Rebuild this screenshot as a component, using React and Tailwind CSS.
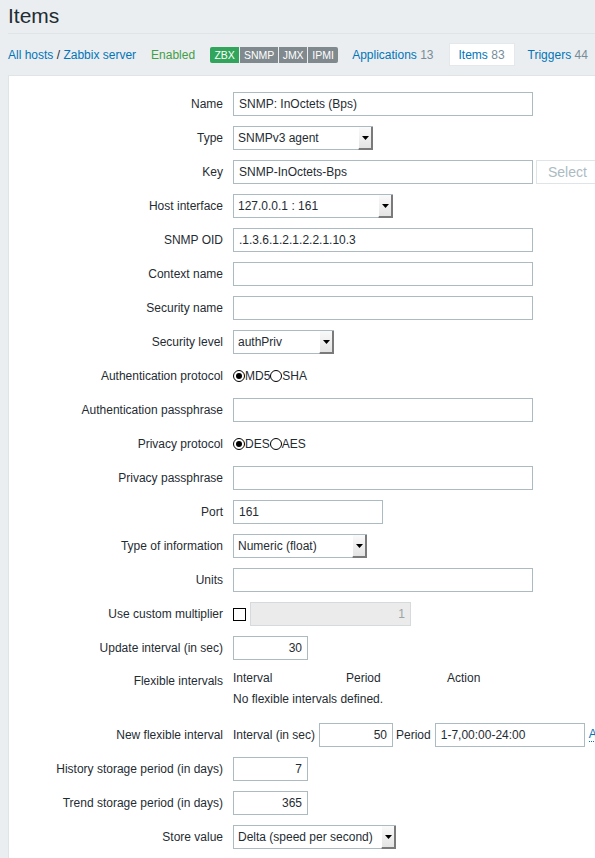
import React from "react";

const Input = ({ w = "w-[300px]", value = "", right = false }) => (
  <div
    className={`h-[24px] border border-[#acbbc2] bg-white flex items-center px-[5px] text-[#1f2c33] whitespace-nowrap overflow-hidden ${w} ${right ? "justify-end" : ""}`}
  >
    {value}
  </div>
);

const Select = ({ w, value }) => (
  <div className={`relative h-[24px] border border-[#acbbc2] bg-white flex items-center pl-[4px] text-[#1f2c33] whitespace-nowrap ${w}`}>
    <span>{value}</span>
    <div className="absolute right-[-1px] top-0 bottom-[-1px] w-[15px] bg-gradient-to-b from-[#fafafa] to-[#e4e4e4] border-l border-l-[#ffffff] border-r-2 border-b-2 border-r-[#7a7a7a] border-b-[#7a7a7a] flex items-center justify-center">
      <svg width="7" height="4" viewBox="0 0 7 4">
        <path d="M0 0h7L3.5 4z" fill="#000" />
      </svg>
    </div>
  </div>
);

const Radio = ({ checked }) => (
  <span className="inline-flex w-[12px] h-[12px] rounded-full border border-black items-center justify-center">
    {checked && <span className="w-[6px] h-[6px] rounded-full bg-black" />}
  </span>
);

const Label = ({ children, top = false }) => (
  <div className={`text-right text-[#1f2c33] whitespace-nowrap ${top ? "self-start pt-[4px] leading-[14px]" : ""}`}>
    {children}
  </div>
);

export default function App() {
  return (
    <div className="w-[595px] h-[858px] overflow-hidden bg-[#ebeef0] font-['Liberation_Sans',Arial,sans-serif] text-[12px] text-[#1f2c33]">
      <div className="pl-[8px]">
        <div className="h-[34px] border-b border-[#dfe4e7] pt-[4px]">
          <h1 className="text-[21px] leading-[24px] text-[#1f2c33]">Items</h1>
        </div>
        <div className="h-[41px] flex items-center whitespace-nowrap">
          <span>
            <span className="text-[#0275b8]">All hosts</span>
            <span> / </span>
            <span className="text-[#0275b8]">Zabbix server</span>
          </span>
          <span className="ml-[15px] text-[#429e47]">Enabled</span>
          <span className="ml-[15px] flex h-[16px] text-[10.5px] leading-[16px] text-white gap-[1px] text-center">
            <span className="bg-[#30a55b] w-[29px] rounded-l-[2px]">ZBX</span>
            <span className="bg-[#7f898e] w-[38px]">SNMP</span>
            <span className="bg-[#7f898e] w-[28px]">JMX</span>
            <span className="bg-[#7f898e] w-[30px] rounded-r-[2px]">IPMI</span>
          </span>
          <span className="ml-[14px]">
            <span className="text-[#0275b8]">Applications</span>
            <span className="text-[#768d99]"> 13</span>
          </span>
          <span className="ml-[15px] h-[23px] flex items-center px-[9px] bg-white border border-[#e4e8eb]">
            <span className="text-[#0275b8]">Items</span>
            <span className="text-[#768d99]">&nbsp;83</span>
          </span>
          <span className="ml-[13px]">
            <span className="text-[#0275b8]">Triggers</span>
            <span className="text-[#768d99]"> 44</span>
          </span>
        </div>
        <div className="bg-white border-l border-t border-[#dfe4e7] h-[800px] pt-[16px]">
          <div className="grid grid-cols-[214px_1fr] gap-x-[10px] gap-y-[10px] items-center">
            <Label>Name</Label>
            <div className="flex"><Input value="SNMP: InOctets (Bps)" /></div>

            <Label>Type</Label>
            <div className="flex"><Select w="w-[140px]" value="SNMPv3 agent" /></div>

            <Label>Key</Label>
            <div className="flex items-center whitespace-nowrap">
              <Input value="SNMP-InOctets-Bps" />
              <div className="ml-[3px] h-[24px] border border-[#dfe4e7] bg-white px-[11px] flex items-center text-[14px] text-[#acbbc2] shrink-0">
                Select
              </div>
            </div>

            <Label>Host interface</Label>
            <div className="flex"><Select w="w-[160px]" value="127.0.0.1 : 161" /></div>

            <Label>SNMP OID</Label>
            <div className="flex"><Input value=".1.3.6.1.2.1.2.2.1.10.3" /></div>

            <Label>Context name</Label>
            <div className="flex"><Input /></div>

            <Label>Security name</Label>
            <div className="flex"><Input /></div>

            <Label>Security level</Label>
            <div className="flex"><Select w="w-[101px]" value="authPriv" /></div>

            <Label>Authentication protocol</Label>
            <div className="flex items-center h-[24px]">
              <Radio checked />
              <span>MD5</span>
              <Radio />
              <span>SHA</span>
            </div>

            <Label>Authentication passphrase</Label>
            <div className="flex"><Input /></div>

            <Label>Privacy protocol</Label>
            <div className="flex items-center h-[24px]">
              <Radio checked />
              <span>DES</span>
              <Radio />
              <span>AES</span>
            </div>

            <Label>Privacy passphrase</Label>
            <div className="flex"><Input /></div>

            <Label>Port</Label>
            <div className="flex"><Input w="w-[150px]" value="161" /></div>

            <Label>Type of information</Label>
            <div className="flex"><Select w="w-[134px]" value="Numeric (float)" /></div>

            <Label>Units</Label>
            <div className="flex"><Input /></div>

            <Label>Use custom multiplier</Label>
            <div className="flex items-center">
              <span className="w-[13px] h-[13px] border-[1.5px] border-black bg-white" />
              <div className="ml-[4px] h-[24px] w-[161px] border border-[#d5dadd] bg-[#ebebeb] flex items-center justify-end px-[5px] text-[#9aa3a8]">
                1
              </div>
            </div>

            <Label>Update interval (in sec)</Label>
            <div className="flex"><Input w="w-[75px]" value="30" right /></div>

            <Label top>Flexible intervals</Label>
            <div className="flex flex-col pb-[6px]">
              <div className="flex h-[16px] items-center">
                <span className="w-[113px]">Interval</span>
                <span className="w-[101px]">Period</span>
                <span>Action</span>
              </div>
              <div className="mt-[5px] h-[16px] flex items-center">No flexible intervals defined.</div>
            </div>

            <Label>New flexible interval</Label>
            <div className="flex items-center whitespace-nowrap">
              <span>Interval (in sec)</span>
              <div className="ml-[4px]"><Input w="w-[74px]" value="50" right /></div>
              <span className="ml-[3px]">Period</span>
              <div className="ml-[4px]"><Input w="w-[150px]" value="1-7,00:00-24:00" /></div>
              <span className="ml-[4px] text-[#0275b8] border-b border-dotted border-[#0275b8] leading-[13px]">Add</span>
            </div>

            <Label>History storage period (in days)</Label>
            <div className="flex"><Input w="w-[75px]" value="7" right /></div>

            <Label>Trend storage period (in days)</Label>
            <div className="flex"><Input w="w-[75px]" value="365" right /></div>

            <Label>Store value</Label>
            <div className="flex"><Select w="w-[163px]" value="Delta (speed per second)" /></div>
          </div>
        </div>
      </div>
    </div>
  );
}
